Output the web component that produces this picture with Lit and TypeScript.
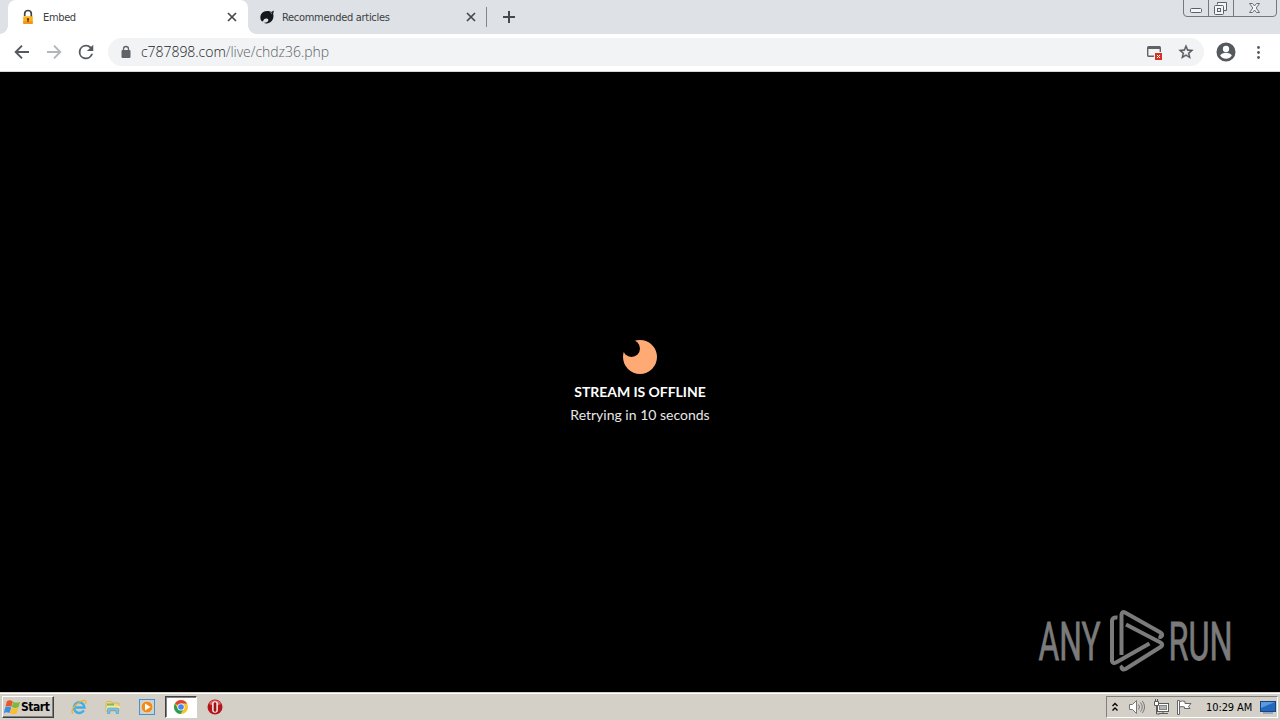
import { css, html, LitElement } from "lit";
import { customElement, property } from "lit/decorators.js";

@customElement("tab-strip")
export class TabStrip extends LitElement {
  static styles = css`
    :host {
      display: flex;
      position: relative;
      height: 34px;
      background: #dee1e6;
      font: 11px "DejaVu Sans Condensed", "Noto Sans", sans-serif;
      color: #3c4043;
    }
    svg {
      display: block;
      flex: none;
    }
    .tab {
      display: flex;
      align-items: center;
      box-sizing: border-box;
      width: 240px;
      height: 34px;
      padding: 0 10px 0 12px;
      gap: 7px;
    }
    .active {
      position: relative;
      margin-left: 8px;
      background: #fff;
      border-radius: 8px 8px 0 0;
    }
    .active::before,
    .active::after {
      content: "";
      position: absolute;
      bottom: 0;
      width: 8px;
      height: 8px;
    }
    .active::before {
      left: -8px;
      background: radial-gradient(circle at 0 0, transparent 7.5px, #fff 8px);
    }
    .active::after {
      right: -8px;
      background: radial-gradient(circle at 100% 0, transparent 7.5px, #fff 8px);
    }
    .other {
      width: 239px;
      padding-left: 11px;
    }
    .title {
      flex: 1;
      white-space: nowrap;
    }
    .other .title {
      letter-spacing: -0.3px;
    }
    .active .title {
      letter-spacing: -0.35px;
    }
    .divider {
      width: 1px;
      height: 20px;
      margin: 7px 15px 0 -1px;
      background: #80868b;
    }
    .plus {
      margin-top: 10px;
    }
    .window-buttons {
      position: absolute;
      top: 0;
      right: 3px;
    }
  `;

  closeIcon() {
    return html`<svg width="12" height="12" viewBox="0 0 12 12">
      <path d="M2 2l8 8M10 2l-8 8" stroke="#45494d" stroke-width="1.7" />
    </svg>`;
  }

  render() {
    return html`
      <div class="tab active">
        <svg width="16" height="16" viewBox="0 0 16 16">
          <path
            d="M4.700 7V4.800a3.300 3.300 0 0 1 6.600 0V8"
            fill="none"
            stroke="#424242"
            stroke-width="1.700"
          />
          <rect x="3.200" y="7.300" width="9.600" height="7.700" rx="1" fill="#fbb117" />
          <path d="M3.200 12.300h9.600V14a1 1 0 0 1-1 1H4.200a1 1 0 0 1-1-1z" fill="#f4931e" />
          <path d="M8 9a1.200 1.200 0 0 1 .6 2.200V13H7.400v-1.800A1.200 1.200 0 0 1 8 9z" fill="#5b3714" />
        </svg>
        <span class="title">Embed</span>
        ${this.closeIcon()}
      </div>
      <div class="tab other">
        <svg width="16" height="16" viewBox="0 0 16 16">
          <path
            d="M1.500 10C.5 5 4 2 8 2c2 0 3 .3 4.200 1L15 1.600l-.9 3.200C15.500 9 13 14 8 14.500c-1.500.1-2.500-.2-3.200-.8 2 .2 3.600-.5 4.300-1.600.8-1.600-.2-2.900-1.900-2.700-1.700.1-2.700 1.200-3.200 3C2.700 12.300 1.800 11.400 1.500 10z"
            fill="#15171f"
          />
          <path d="M11.500 3.500l1.500 1" stroke="#9ba0aa" />
        </svg>
        <span class="title">Recommended articles</span>
        ${this.closeIcon()}
      </div>
      <div class="divider"></div>
      <svg class="plus" width="14" height="14" viewBox="0 0 14 14">
        <path d="M7 1v12M1 7h12" stroke="#45494d" stroke-width="2" />
      </svg>
      <svg class="window-buttons" width="94" height="17" viewBox="0 0 94 17" fill="none">
        <path
          d="M.5 0v13q0 3.500 3.500 3.500h86q3.500 0 3.500-3.500V0M25.500 0v16M50.500 0v16"
          stroke="#74787f"
        />
        <rect x="7.500" y="8.500" width="11" height="4" rx="1" fill="#f4f5f7" stroke="#5d6167" />
        <path d="M34.500 4.500v-2h9v8h-3" stroke="#5d6167" fill="#f4f5f7" />
        <rect x="31.500" y="5.500" width="9" height="9" rx="1" fill="#f4f5f7" stroke="#5d6167" />
        <rect x="34.500" y="8.500" width="3" height="3" stroke="#5d6167" />
        <path
          d="M66.500 3.500h3l2 2.500 2-2.500h3l-3.300 4.500 3.300 4.500h-3l-2-2.500-2 2.500h-3l3.300-4.500z"
          fill="#f4f5f7"
          stroke="#6b6f75"
        />
      </svg>
    `;
  }
}

@customElement("address-bar")
export class AddressBar extends LitElement {
  static styles = css`
    :host {
      display: flex;
      align-items: center;
      box-sizing: border-box;
      height: 38px;
      padding: 0 12px 1px 12px;
      background: #fff;
      border-bottom: 1px solid #d5d7da;
    }
    svg {
      display: block;
      flex: none;
    }
    .nav {
      display: flex;
      gap: 12px;
    }
    .omnibox {
      display: flex;
      align-items: center;
      box-sizing: border-box;
      width: 1096px;
      height: 28px;
      margin: 0 12px;
      padding: 0 10px 0 12px;
      border-radius: 14px;
      background: #f1f3f4;
    }
    .url {
      flex: 1;
      margin: -2px 0 0 9px;
      font: 300 14px "Open Sans", "Noto Sans", sans-serif;
      letter-spacing: -0.04px;
      color: #5f6368;
    }
    .host {
      color: #202124;
    }
    .actions {
      display: flex;
      gap: 15px;
    }
    .menu {
      margin-left: 12px;
    }
  `;

  render() {
    return html`
      <div class="nav">
        <svg width="20" height="20" viewBox="0 0 20 20" fill="none" stroke="#55595e" stroke-width="1.900">
          <path d="M17 10H4.500M10 3.700L3.700 10l6.300 6.300" />
        </svg>
        <svg width="20" height="20" viewBox="0 0 20 20" fill="none" stroke="#b4b7ba" stroke-width="1.900">
          <path d="M3 10h12.500M10 3.700l6.300 6.300-6.300 6.300" />
        </svg>
        <svg width="20" height="20" viewBox="1 1 22 22" fill="#55595e">
          <path
            d="M17.650 6.350A7.960 7.960 0 0 0 12 4a8 8 0 1 0 7.730 10h-2.080A6 6 0 1 1 12 6c1.660 0 3.140.69 4.220 1.780L13 11h7V4l-2.350 2.350z"
          />
        </svg>
      </div>
      <div class="omnibox">
        <svg width="12" height="14" viewBox="0 0 12 14" fill="#5f6368">
          <rect x="1.500" y="5" width="9" height="8" rx="1" />
          <path d="M3.500 6V4a2.500 2.500 0 0 1 5 0v2" fill="none" stroke="#5f6368" stroke-width="1.300" />
        </svg>
        <div class="url"><span class="host">c787898.com</span>/live/chdz36.php</div>
        <div class="actions">
          <svg width="17" height="16" viewBox="0 0 17 16">
            <path d="M2 2.500h12v2.500H2z" fill="#5f6368" />
            <rect x="1.700" y="2.700" width="12.600" height="9.600" rx="1" fill="none" stroke="#5f6368" stroke-width="1.400" />
            <rect x="8" y="8" width="8.500" height="8" fill="#f1f3f4" />
            <rect x="9" y="9" width="7" height="7" fill="#d93025" />
            <path d="M11 11l3 3M14 11l-3 3" stroke="#fff" />
          </svg>
          <svg width="16" height="16" viewBox="1 1 22 22" fill="#55595e" stroke="#55595e" stroke-width=".5">
            <path
              d="M22 9.240l-7.190-.62L12 2 9.190 8.630 2 9.240l5.460 4.730L5.820 21 12 17.270 18.180 21l-1.630-7.030L22 9.240zM12 15.400l-3.760 2.270 1-4.280-3.320-2.880 4.380-.38L12 6.100l1.710 4.040 4.380.38-3.320 2.880 1 4.280L12 15.400z"
            />
          </svg>
        </div>
      </div>
      <svg width="20" height="20" viewBox="1.500 1.500 21 21" fill="#55595e">
        <path
          d="M12 2a10 10 0 1 0 0 20 10 10 0 0 0 0-20zm0 3.500a3.300 3.300 0 1 1 0 6.600 3.300 3.300 0 0 1 0-6.600zm0 13.700a7.200 7.200 0 0 1-6-3.220c.03-1.990 4-3.080 6-3.080s5.970 1.090 6 3.080a7.200 7.200 0 0 1-6 3.220z"
        />
      </svg>
      <svg class="menu" width="20" height="20" viewBox="0 0 20 20" fill="#55595e">
        <circle cx="10.500" cy="5.500" r="1.400" />
        <circle cx="10.500" cy="10.500" r="1.400" />
        <circle cx="10.500" cy="15.500" r="1.400" />
      </svg>
    `;
  }
}

@customElement("stream-page")
export class StreamPage extends LitElement {
  @property({ type: Number }) seconds = 10;

  static styles = css`
    :host {
      display: flex;
      position: relative;
      flex-direction: column;
      align-items: center;
      box-sizing: border-box;
      padding-top: 268px;
      background: #000;
      color: #fff;
      font-family: Lato, sans-serif;
      font-size: 14px;
    }
    .spinner {
      display: block;
    }
    .heading {
      margin-top: 8px;
      line-height: 20px;
      font-weight: 700;
      letter-spacing: -0.05px;
    }
    .retry {
      margin-top: 3px;
      line-height: 20px;
      color: #e8e8e8;
    }
    .watermark {
      position: absolute;
      right: 36px;
      bottom: 12px;
      overflow: visible;
    }
    .brand {
      font: 400 53px Roboto, sans-serif;
      stroke: #7b7b7b;
      stroke-width: 0.8px;
    }
  `;

  render() {
    return html`
      <svg class="spinner" width="34" height="34" viewBox="0 0 34 34">
        <circle cx="17" cy="17" r="17" fill="#ffa974" />
        <circle cx="8.500" cy="8.500" r="8.500" fill="#000" />
      </svg>
      <div class="heading">STREAM IS OFFLINE</div>
      <div class="retry">Retrying in ${this.seconds} seconds</div>
      <svg class="watermark" width="220" height="80" viewBox="1024 600 220 80" fill="#7b7b7b">
        <text class="brand" x="1038.500" y="660" textLength="62" lengthAdjust="spacingAndGlyphs">ANY</text>
        <text class="brand" x="1168.500" y="660" textLength="64" lengthAdjust="spacingAndGlyphs">RUN</text>
        <g fill="none" stroke="#7b7b7b" stroke-width="4" stroke-linejoin="round">
          <path d="M1117.500 617.500q-5-.5-5.500 3v40.500q1 3 4 1.500l33.500-19" />
          <path d="M1121.500 655v-40.500q.5-3.500 3.500-2l35.500 20q3.500 2.500 0 4.500l-2-.5" />
          <path d="M1126 624.500l34.500 18q3.500 2 0 4.500L1125.500 669q-3.500 1.500-4-1.500l1.500-1.500" />
        </g>
      </svg>
    `;
  }
}

@customElement("task-bar")
export class TaskBar extends LitElement {
  @property() clock = "10:29 AM";

  static styles = css`
    :host {
      display: flex;
      align-items: center;
      box-sizing: border-box;
      height: 28px;
      padding: 1px 2px 0;
      background: #d4d0c8;
      border-top: 1px solid #d4d0c8;
      box-shadow: inset 0 1px #fff;
      font: 11px "DejaVu Sans Condensed", sans-serif;
      color: #000;
    }
    svg {
      display: block;
      flex: none;
    }
    .start {
      display: flex;
      align-items: center;
      box-sizing: border-box;
      width: 52px;
      height: 22px;
      padding-left: 1px;
      gap: 0;
      border: 1px solid;
      border-color: #fff #404040 #404040 #fff;
      box-shadow: inset -1px -1px #808080;
      font-size: 12px;
      font-weight: 700;
      letter-spacing: -0.45px;
    }
    .launch {
      display: flex;
      align-items: center;
      margin-left: 17px;
    }
    .launch > svg {
      margin-right: 18px;
    }
    .launch .player {
      margin-right: 10px;
    }
    .running {
      display: flex;
      align-items: center;
      justify-content: center;
      box-sizing: border-box;
      width: 32px;
      height: 22px;
      margin-right: 10px;
      border: 1px solid;
      border-color: #404040 #fff #fff #404040;
      background: #fff;
      box-shadow: inset 1px 1px #808080;
    }
    .tray {
      display: flex;
      align-items: center;
      box-sizing: border-box;
      width: 172px;
      height: 22px;
      margin-left: auto;
      padding-left: 4px;
      border: 1px solid;
      border-color: #808080 #fff #fff #808080;
    }
    .volume {
      margin-left: 9px;
    }
    .network,
    .flag {
      margin-left: 7px;
    }
    .clock {
      width: 47px;
      margin: 0 7px 0 13px;
      letter-spacing: -0.1px;
      white-space: nowrap;
    }
  `;

  render() {
    return html`
      <div class="start">
        <svg width="17" height="17" viewBox="0.500 0.500 15 15">
          <path d="M3 2.500c2-1.300 3.500-1 5.300.1L7 7.400c-1.600-1-3.400-1-5.200 0z" fill="#e8572a" />
          <path d="M8.700 2.900c1.900 1 3.700 1 6 0l-1.400 4.800c-2 1-4 .9-5.900-.1z" fill="#7cb93e" />
          <path d="M1.600 7.900c2-1.200 3.500-1 5.200 0l-1.300 5c-1.600-1-3.300-1-5.200.1z" fill="#3d8ede" />
          <path d="M7.300 8.200c1.800 1 3.800 1 5.900 0l-1.500 5c-2 1-3.800.9-5.700-.1z" fill="#f9bf2c" />
        </svg>
        <span>Start</span>
      </div>
      <div class="launch">
        <svg width="16" height="16" viewBox="0 0 16 16" fill="none">
          <path d="M12.800 11.300A5.300 5.300 0 1 1 13.500 8.500H4" stroke="#41aee6" stroke-width="2.400" />
          <path d="M2 14.500C-1 12.500 4 5 10 2.200c4-1.700 6-.7 4.500 2.800" stroke="#e7b32e" stroke-width="1.200" />
        </svg>
        <svg width="16" height="16" viewBox="0 0 16 16">
          <path d="M1 3.500l1-1h4l1 1.500h7v8H1z" fill="#f2d675" stroke="#d1aa45" stroke-width=".7" />
          <path d="M2 4.500h7v2H2z" fill="#79bb63" />
          <path d="M2 7h13l-1 4H1z" fill="#f9e99e" />
          <path d="M2.500 14.500V10q0-1 1-1h9q1 0 1 1v4.500h-2.500v-3H5v3z" fill="#7cc1e8" stroke="#4f9cca" stroke-width=".6" />
        </svg>
        <svg class="player" width="16" height="16" viewBox="0 0 16 16">
          <rect x=".5" y=".5" width="15" height="15" fill="#b7d7ef" stroke="#4e8fc6" />
          <circle cx="8" cy="8" r="6" fill="#f38a1c" stroke="#fbd5a5" />
          <path d="M6 4.500l5.500 3.500L6 11.500z" fill="#fff" />
        </svg>
        <div class="running">
          <svg width="16" height="16" viewBox="0 0 16 16">
            <circle cx="8" cy="8" r="7" fill="#f9c32a" />
            <path d="M8 8L1.940 4.500A7 7 0 0 1 14.060 4.500H8z" fill="#dc4437" />
            <path d="M1.940 4.500A7 7 0 0 0 7.500 15l3.500-5.200-3 1.700-3-1.800z" fill="#2c9d57" />
            <circle cx="8" cy="8" r="3.600" fill="#fff" />
            <circle cx="8" cy="8" r="2.800" fill="#4285f4" />
          </svg>
        </div>
        <svg width="16" height="16" viewBox="0 0 16 16">
          <circle cx="8" cy="8" r="7.500" fill="#b5161b" />
          <path d="M2 5a6.700 6.700 0 0 1 12 0Q8 8 2 5z" fill="#dc6265" />
          <rect x="5.200" y="2.200" width="5.600" height="11.600" rx="2.800" fill="#fff" />
          <rect x="6.600" y="3.200" width="2.800" height="9.600" rx="1.400" fill="#9d1117" />
        </svg>
      </div>
      <div class="tray">
        <svg width="8" height="10" viewBox="0 0 8 10" fill="none" stroke="#000" stroke-width="1.300">
          <path d="M1.500 4L4 1.500 6.500 4M1.500 8.500L4 6l2.500 2.500" />
        </svg>
        <svg class="volume" width="18" height="16" viewBox="0 0 18 16" fill="none" stroke="#77777a">
          <path d="M1.500 5.500h3l4-4v13l-4-4h-3z" fill="#fff" />
          <path d="M10.500 5.500q2 2.500 0 5M12.500 3.500q3.500 4.500 0 9M14.300 2q4.500 6 0 12" />
        </svg>
        <svg class="network" width="16" height="16" viewBox="0 0 16 16" fill="none" stroke="#5c5c5e">
          <rect x="4.500" y="4.500" width="11" height="8" fill="#fff" />
          <rect x="6.500" y="6.500" width="7" height="4" fill="#b5b5b6" stroke="#858587" />
          <path d="M6 14.500h9M10 12.500v2M3.500 7v8h3" />
          <path d="M1.500 2.500h4v4h-4zM2.500 0v2M4.500 0v2" fill="#fff" />
        </svg>
        <svg class="flag" width="17" height="16" viewBox="0 0 17 16" fill="#fff" stroke="#666668">
          <path d="M1.500 1.500h2v14h-2z" />
          <path d="M3.500 2.500q3-1 5.500 0v2h6l-2.500 3 1.500 2H8.500v-1.500q-2.500-.8-5 0z" />
        </svg>
        <span class="clock">${this.clock}</span>
        <svg width="16" height="16" viewBox="0 0 16 16">
          <rect x=".5" y="2.500" width="15" height="10" fill="#2268bd" stroke="#1b437f" />
          <path d="M1 3h14L1 9z" fill="#5a9be0" />
          <path d="M3 14h10" stroke="#5d7fa8" />
        </svg>
      </div>
    `;
  }
}

@customElement("app-root")
export class AppRoot extends LitElement {
  static styles = css`
    :host {
      display: flex;
      flex-direction: column;
      width: 1280px;
      height: 720px;
      overflow: hidden;
    }
    stream-page {
      flex: 1;
    }
  `;

  render() {
    return html`
      <tab-strip></tab-strip>
      <address-bar></address-bar>
      <stream-page></stream-page>
      <task-bar></task-bar>
    `;
  }
}
